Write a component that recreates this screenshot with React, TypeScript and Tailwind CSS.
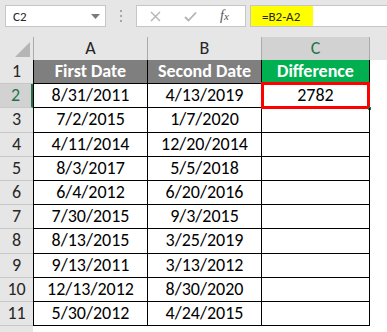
import React from "react";

const rows: [string, string, string][] = [
  ["8/31/2011", "4/13/2019", "2782"],
  ["7/2/2015", "1/7/2020", ""],
  ["4/11/2014", "12/20/2014", ""],
  ["8/3/2017", "5/5/2018", ""],
  ["6/4/2012", "6/20/2016", ""],
  ["7/30/2015", "9/3/2015", ""],
  ["8/13/2015", "3/25/2019", ""],
  ["9/13/2011", "3/13/2012", ""],
  ["12/13/2012", "8/30/2020", ""],
  ["5/30/2012", "4/24/2015", ""],
];

export default function App() {
  return (
    <div
      className="w-[387px] h-[332px] overflow-hidden bg-white text-black"
      style={{ fontFamily: "Carlito, Lato, 'Open Sans', sans-serif" }}
    >
      {/* formula bar */}
      <div className="flex h-[37px] bg-[#e6e6e6] pt-[5px] pl-[5px] items-start">
        <div className="w-[101px] h-[22px] bg-white border border-[#c6c6c6] flex items-center justify-between pl-[7px] pr-[5px]">
          <span className="text-[13px] text-[#262626] leading-none">C2</span>
          <svg width="9" height="5" viewBox="0 0 9 5">
            <path d="M0 0 L9 0 L4.5 5 Z" fill="#7a7a7a" />
          </svg>
        </div>
        <div className="w-[30px] h-[22px] flex items-center justify-center">
          <svg width="3" height="12" viewBox="0 0 3 12">
            <rect x="0" y="0" width="2" height="2" fill="#a6a6a6" />
            <rect x="0" y="5" width="2" height="2" fill="#a6a6a6" />
            <rect x="0" y="10" width="2" height="2" fill="#a6a6a6" />
          </svg>
        </div>
        <div className="w-[110px] h-[22px] bg-white border border-[#c6c6c6] flex items-center">
          <svg className="ml-[13px]" width="11" height="11" viewBox="0 0 11 11">
            <path d="M1 1 L10 10 M10 1 L1 10" stroke="#b3b3b3" strokeWidth="1.4" />
          </svg>
          <svg className="ml-[23px]" width="13" height="11" viewBox="0 0 13 11">
            <path d="M1 6 L4.5 9.5 L12 1.5" stroke="#b3b3b3" strokeWidth="1.8" fill="none" />
          </svg>
          <span
            className="ml-[23px] text-[14px] italic text-[#555] leading-none"
            style={{ fontFamily: "'Liberation Serif', serif" }}
          >
            f<span className="text-[11px]">x</span>
          </span>
        </div>
        <div className="ml-[4px] flex-1 h-[22px] bg-white border-y border-l border-[#c6c6c6] flex">
          <div className="w-[62px] h-full bg-[#ffff00] flex items-center pl-[11px]">
            <span className="text-[13px] text-[#262626] leading-none">=B2-A2</span>
          </div>
        </div>
      </div>

      {/* column headers */}
      <div className="flex h-[23px] bg-[#e6e6e6] text-[18px] text-[#262626]">
        <div className="w-[34px] h-full border-r border-[#ababab] relative">
          <svg className="absolute right-[3px] bottom-[3px]" width="15" height="15" viewBox="0 0 15 15">
            <path d="M15 0 L15 15 L0 15 Z" fill="#b5b5b5" />
          </svg>
        </div>
        <div className="w-[114px] h-full border-r border-[#ababab] flex items-center justify-center">A</div>
        <div className="w-[114px] h-full border-r border-[#ababab] flex items-center justify-center">B</div>
        <div className="w-[108px] h-full border-r border-[#ababab] bg-[#d2d2d2] text-[#217346] flex items-center justify-center">C</div>
        <div className="flex-1 h-full" />
      </div>

      {/* row 1 */}
      <div className="flex h-[24.2px]">
        <div className="w-[33px] h-full bg-[#e6e6e6] border-b border-[#c8c8c8] flex items-center justify-center text-[18px] text-[#262626]">1</div>
        <div className="w-[115px] h-full bg-[#7f7f7f] border-l border-r border-b border-black flex items-center justify-center text-white font-bold text-[18px]">First Date</div>
        <div className="w-[114px] h-full bg-[#7f7f7f] border-r border-b border-black flex items-center justify-center text-white font-bold text-[18px]">Second Date</div>
        <div className="w-[108px] h-full bg-[#00b050] border-r border-b border-black flex items-center justify-center text-white font-bold text-[18px]">Difference</div>
      </div>

      {rows.map((r, i) => {
        const n = i + 2;
        const sel = n === 2;
        return (
          <div key={n} className="flex h-[24.2px]">
            <div
              className={
                sel
                  ? "w-[33px] h-full bg-[#d2d2d2] border-b border-[#c8c8c8] border-r-2 border-r-[#217346] flex items-center justify-center text-[18px] text-[#217346]"
                  : "w-[33px] h-full bg-[#e6e6e6] border-b border-[#c8c8c8] flex items-center justify-center text-[18px] text-[#262626]"
              }
            >
              {n}
            </div>
            <div className="w-[115px] h-full border-l border-r border-b border-black flex items-center justify-center text-[18px]">{r[0]}</div>
            <div className="w-[114px] h-full border-r border-b border-black flex items-center justify-center text-[18px]">{r[1]}</div>
            <div className="w-[108px] h-full border-r border-b border-black flex items-center justify-center text-[18px] relative">
              {r[2]}
              {sel && (
                <>
                  <div className="absolute left-[-1px] right-[-1px] top-[-2px] bottom-[-2px] border-[3px] border-[#ff0000]" />
                  <div className="absolute right-[-2px] bottom-[-3px] w-[3px] h-[3px] bg-[#217346]" />
                </>
              )}
            </div>
          </div>
        );
      })}

      {/* row 12 partial */}
      <div className="flex h-[24px]">
        <div className="w-[33px] h-full bg-[#e6e6e6] flex items-center justify-center text-[18px] text-[#262626]">12</div>
      </div>
    </div>
  );
}
